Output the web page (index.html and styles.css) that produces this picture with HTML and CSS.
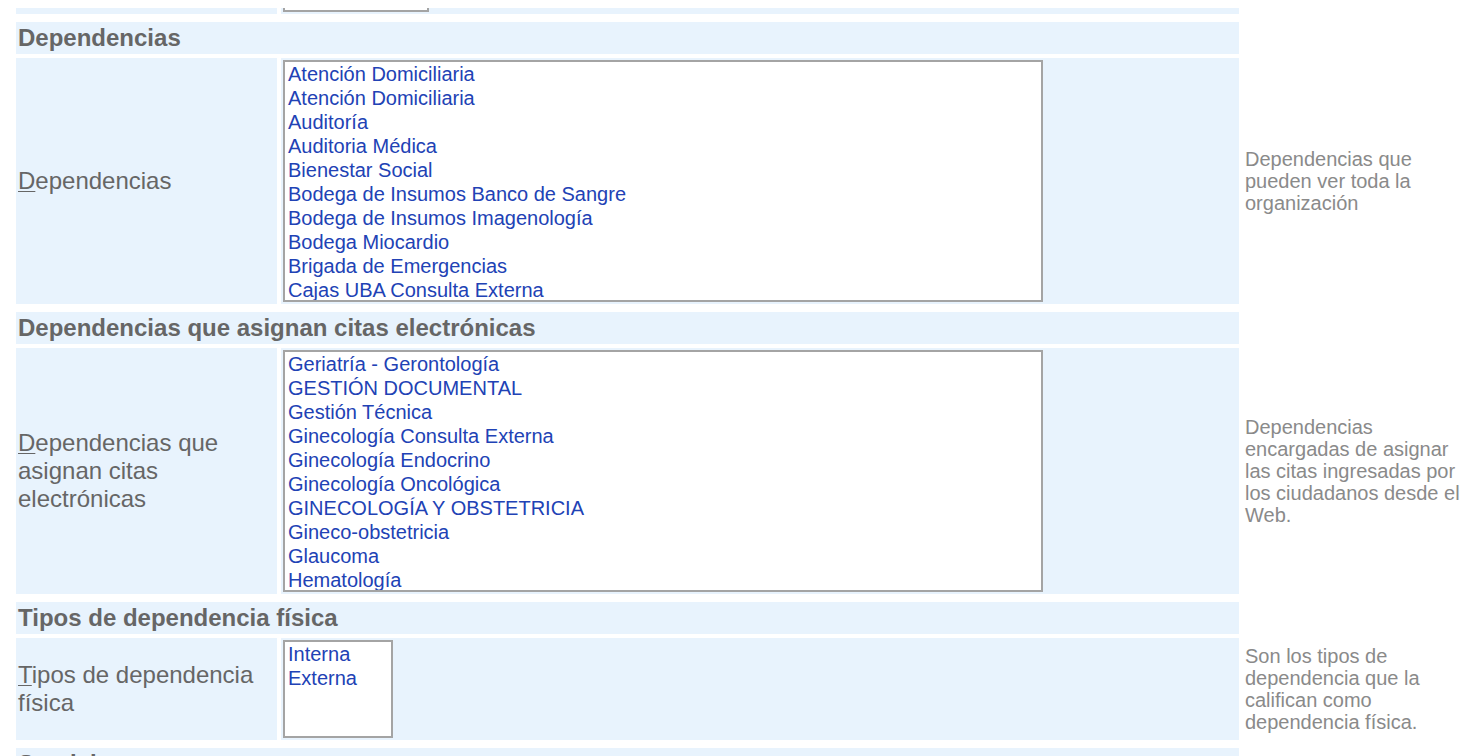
FILE: index.html
```html
<!DOCTYPE html>
<html lang="es">
<head>
<meta charset="utf-8">
<title>Dependencias</title>
<link rel="stylesheet" href="styles.css">
</head>
<body>
<main class="page">
  <section class="group">
    <div class="field-label"></div>
    <div class="field-control"><div class="listbox listbox-small"></div></div>
    <div class="field-help"></div>
  </section>

  <section class="group">
    <h2 class="group-title">Dependencias</h2>
    <div class="field-label"><span><u>D</u>ependencias</span></div>
    <div class="field-control">
      <div class="listbox listbox-wide">
        <div class="opt">Atención Domiciliaria</div>
        <div class="opt">Atención Domiciliaria</div>
        <div class="opt">Auditoría</div>
        <div class="opt">Auditoria Médica</div>
        <div class="opt">Bienestar Social</div>
        <div class="opt">Bodega de Insumos Banco de Sangre</div>
        <div class="opt">Bodega de Insumos Imagenología</div>
        <div class="opt">Bodega Miocardio</div>
        <div class="opt">Brigada de Emergencias</div>
        <div class="opt">Cajas UBA Consulta Externa</div>
      </div>
    </div>
    <p class="field-help">Dependencias que pueden ver toda la organización</p>
  </section>

  <section class="group">
    <h2 class="group-title">Dependencias que asignan citas electrónicas</h2>
    <div class="field-label"><span><u>D</u>ependencias que asignan citas electrónicas</span></div>
    <div class="field-control">
      <div class="listbox listbox-wide">
        <div class="opt">Geriatría - Gerontología</div>
        <div class="opt">GESTIÓN DOCUMENTAL</div>
        <div class="opt">Gestión Técnica</div>
        <div class="opt">Ginecología Consulta Externa</div>
        <div class="opt">Ginecología Endocrino</div>
        <div class="opt">Ginecología Oncológica</div>
        <div class="opt">GINECOLOGÍA Y OBSTETRICIA</div>
        <div class="opt">Gineco-obstetricia</div>
        <div class="opt">Glaucoma</div>
        <div class="opt">Hematología</div>
      </div>
    </div>
    <p class="field-help">Dependencias encargadas de asignar las citas ingresadas por los ciudadanos desde el Web.</p>
  </section>

  <section class="group">
    <h2 class="group-title">Tipos de dependencia física</h2>
    <div class="field-label"><span><u>T</u>ipos de dependencia física</span></div>
    <div class="field-control">
      <div class="listbox listbox-tipos">
        <div class="opt">Interna</div>
        <div class="opt">Externa</div>
      </div>
    </div>
    <p class="field-help">Son los tipos de dependencia que la califican como dependencia física.</p>
  </section>

  <section class="group">
    <h2 class="group-title">Servicios</h2>
  </section>
</main>
</body>
</html>
```

FILE: styles.css
```css
html, body {
  background: #ffffff;
}

body {
  margin: 8px;
  font-family: "Liberation Sans", Arial, Helvetica, sans-serif;
  color: #666666;
}

.page {
  margin-top: -100px;
  padding-left: 4px;
}

.group {
  display: grid;
  grid-template-columns: 261px 958px 1fr;
  gap: 4px;
  padding: 4px;
}

.group-title {
  grid-column: 1 / 3;
  margin: 0;
  padding: 2px 2px;
  background: #e8f3fd;
  font-size: 24px;
  line-height: 28px;
  font-weight: bold;
  color: #666666;
}

.field-label {
  grid-column: 1;
  display: flex;
  align-items: center;
  padding: 2px;
  background: #e8f3fd;
  font-size: 24px;
  line-height: 28px;
  color: #666666;
}

.field-label u {
  text-decoration-thickness: 1px;
  text-underline-offset: 2px;
}

.field-control {
  grid-column: 2;
  padding: 2px;
  background: #e8f3fd;
}

.field-help {
  grid-column: 3;
  align-self: center;
  margin: 0;
  padding-left: 2px;
  font-size: 20px;
  line-height: 22px;
  color: #8a8a8a;
}

.listbox {
  box-sizing: border-box;
  background: #ffffff;
  border: 2px solid #a4a4a4;
  overflow: hidden;
}

.listbox-wide {
  width: 760px;
  height: 242px;
}

.listbox-tipos {
  width: 110px;
  height: 98px;
}

.listbox-small {
  width: 146px;
  height: 98px;
}

.opt {
  padding: 0 3px;
  font-size: 20px;
  line-height: 24px;
  color: #2142b5;
  white-space: nowrap;
}
```
